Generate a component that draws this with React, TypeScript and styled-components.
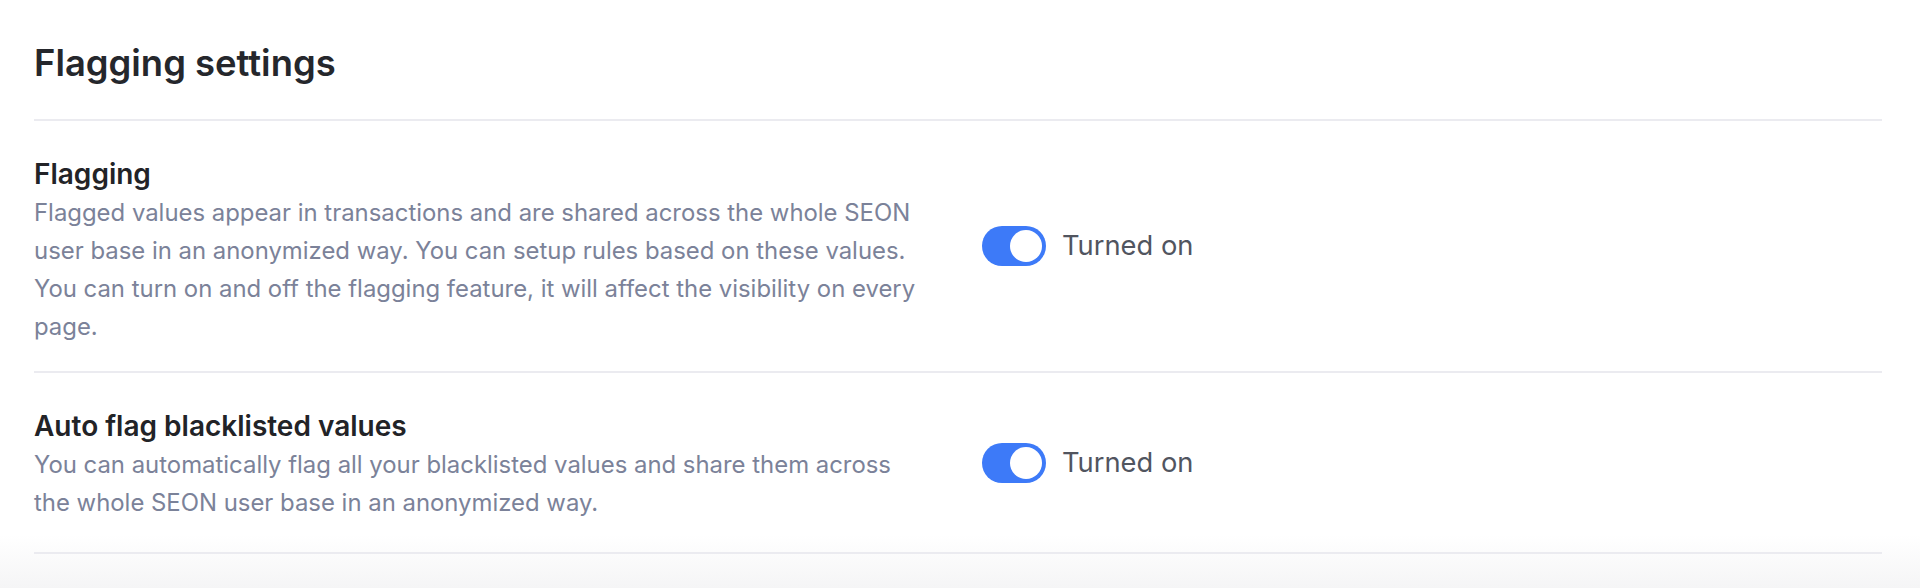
import { createGlobalStyle, styled } from 'styled-components'

const GlobalStyle = createGlobalStyle`
  html, body {
    margin: 0;
    padding: 0;
  }
  body {
    font-family: Inter, 'Noto Sans', sans-serif;
    -webkit-font-smoothing: antialiased;
  }
`

const Page = styled.div`
  min-height: 588px;
  box-sizing: border-box;
  padding: 41px 38px 0 34px;
  background: linear-gradient(to bottom, #ffffff 0, #ffffff 535px, #f5f5f6 588px);
`

const Title = styled.h2`
  margin: 0 0 34px;
  font-size: 36.4px;
  line-height: 44px;
  font-weight: 600;
  color: #25272c;
`

const Section = styled.div`
  border-top: 2px solid #ebebf0;
  &:last-child {
    border-bottom: 2px solid #ebebf0;
  }
`

const Row = styled.div`
  display: grid;
  grid-template-columns: 924px 1fr;
  align-items: center;
`

const Info = styled.div<{ $bottom: number }>`
  display: flex;
  flex-direction: column;
  gap: 2px;
  padding: 35px 0 ${({ $bottom }) => $bottom}px;
`

const Heading = styled.h3`
  margin: 0;
  font-size: 28px;
  line-height: 36px;
  font-weight: 600;
  color: #222327;
`

const Description = styled.p`
  margin: 0;
  max-width: 897px;
  font-size: 23.9px;
  line-height: 38px;
  font-weight: 400;
  color: #7b8299;
`

const ToggleField = styled.label`
  display: flex;
  align-items: center;
  gap: 16px;
  padding-left: 24px;
  cursor: pointer;
`

const Track = styled.span<{ $on: boolean }>`
  position: relative;
  width: 64px;
  height: 40px;
  border-radius: 20px;
  background-color: ${({ $on }) => ($on ? '#3d7af8' : '#cfd3dc')};
  flex-shrink: 0;
`

const Knob = styled.span<{ $on: boolean }>`
  position: absolute;
  top: 4px;
  left: ${({ $on }) => ($on ? '28px' : '4px')};
  width: 32px;
  height: 32px;
  border-radius: 50%;
  background-color: #ffffff;
`

const ToggleText = styled.span`
  font-size: 27.3px;
  line-height: 36px;
  color: #51555f;
`

interface Setting {
  title: string
  description: string
  on: boolean
  bottom: number
}

const settings: Setting[] = [
  {
    title: 'Flagging',
    description:
      'Flagged values appear in transactions and are shared across the whole SEON user base in an anonymized way. You can setup rules based on these values. You can turn on and off the flagging feature, it will affect the visibility on every page.',
    on: true,
    bottom: 25,
  },
  {
    title: 'Auto flag blacklisted values',
    description:
      'You can automatically flag all your blacklisted values and share them across the whole SEON user base in an anonymized way.',
    on: true,
    bottom: 30,
  },
]

const App = () => {
  return (
    <>
      <GlobalStyle />
      <Page>
        <Title>Flagging settings</Title>
        {settings.map((s) => (
          <Section key={s.title}>
            <Row>
              <Info $bottom={s.bottom}>
                <Heading>{s.title}</Heading>
                <Description>{s.description}</Description>
              </Info>
              <ToggleField>
                <Track $on={s.on}>
                  <Knob $on={s.on} />
                </Track>
                <ToggleText>{s.on ? 'Turned on' : 'Turned off'}</ToggleText>
              </ToggleField>
            </Row>
          </Section>
        ))}
      </Page>
    </>
  )
}

export default App
